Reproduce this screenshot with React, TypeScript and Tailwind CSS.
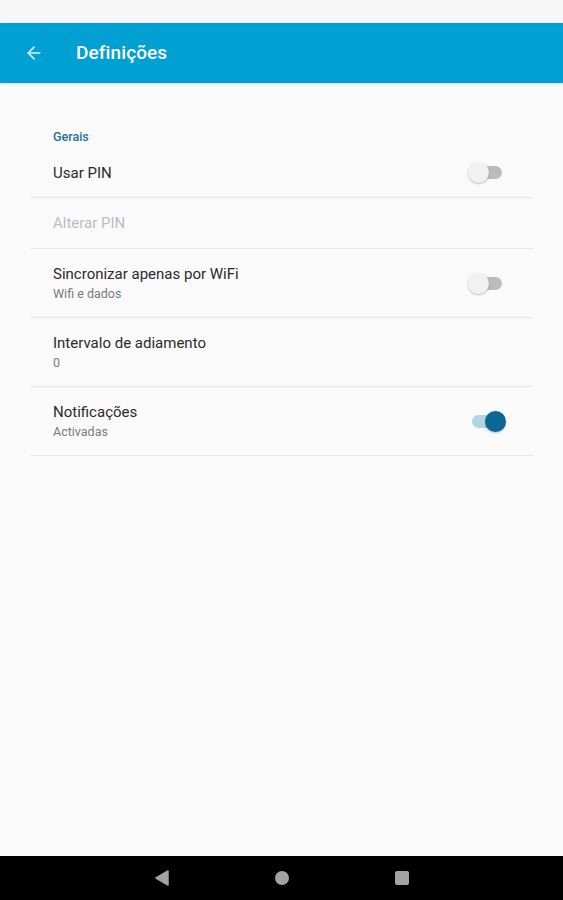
import { ArrowLeft } from 'lucide-react';

type Item = {
  title: string;
  summary?: string;
  toggle?: boolean;
  on?: boolean;
  disabled?: boolean;
  height: string;
};

const items: Item[] = [
  { title: 'Usar PIN', toggle: true, on: false, height: 'h-[50px]' },
  { title: 'Alterar PIN', disabled: true, height: 'h-[51px]' },
  { title: 'Sincronizar apenas por WiFi', summary: 'Wifi e dados', toggle: true, on: false, height: 'h-[69px]' },
  { title: 'Intervalo de adiamento', summary: '0', height: 'h-[69px]' },
  { title: 'Notificações', summary: 'Activadas', toggle: true, on: true, height: 'h-[69px]' },
];

function Switch({ on }: { on?: boolean }) {
  return (
    <div className="relative w-[38px] h-[21px]">
      <div
        className={`absolute left-[4px] right-[4px] top-[4px] h-[13px] rounded-full ${
          on ? 'bg-[#b3d4e1]' : 'bg-[#bbbbbb]'
        }`}
      />
      <div
        className={`absolute top-0 w-[21px] h-[21px] rounded-full shadow-[0_1px_2px_rgba(0,0,0,0.25)] ${
          on ? 'right-0 bg-[#0b6894]' : 'left-0 bg-[#f1f1f1]'
        }`}
      />
    </div>
  );
}

export default function App() {
  return (
    <div className="h-[900px] flex flex-col bg-[#fafafa] font-['Roboto',sans-serif]">
      <div className="h-[23px] bg-[#f7f7f7]" />
      <header className="h-[60px] bg-[#01a0d3] flex items-center text-white shadow-[0_1px_3px_rgba(0,0,0,0.15)]">
        <div className="w-[76px] pl-[24px]">
          <ArrowLeft size={20} strokeWidth={2} className="text-[#d8f1fa]" />
        </div>
        <h1 className="text-[19px] font-medium tracking-[0.1px]">Definições</h1>
      </header>

      <main className="flex-1">
        <div className="mx-[30px] pt-[46px]">
          <div className="pl-[23px] h-[19px] text-[12.5px] leading-4 font-medium text-[#2a6f99]">
            Gerais
          </div>
          {items.map((it) => (
            <div
              key={it.title}
              className={`${it.height} flex items-center pl-[23px] pr-[27px] border-b border-[#e6e6e6]`}
            >
              <div className="flex-1">
                <div
                  className={`text-[15px] leading-5 ${
                    it.disabled ? 'text-[#bdbdbd]' : 'text-[#2b2b2b]'
                  }`}
                >
                  {it.title}
                </div>
                {it.summary && (
                  <div className="mt-[2px] text-[12.5px] leading-4 text-[#7a7a7a]">{it.summary}</div>
                )}
              </div>
              {it.toggle && <Switch on={it.on} />}
            </div>
          ))}
        </div>
      </main>

      <nav className="h-[44px] bg-black flex items-center">
        <div className="w-full flex justify-center gap-[106px]">
          <svg width="14" height="16" viewBox="0 0 14 16">
            <path d="M13 1 L1 8 L13 15 Z" fill="#a3a3a3" stroke="#a3a3a3" strokeWidth="1.5" strokeLinejoin="round" />
          </svg>
          <div className="w-[14px] h-[14px] rounded-full bg-[#a3a3a3] mt-[1px]" />
          <div className="w-[14px] h-[14px] rounded-[2px] bg-[#a3a3a3] mt-[1px]" />
        </div>
      </nav>
    </div>
  );
}
